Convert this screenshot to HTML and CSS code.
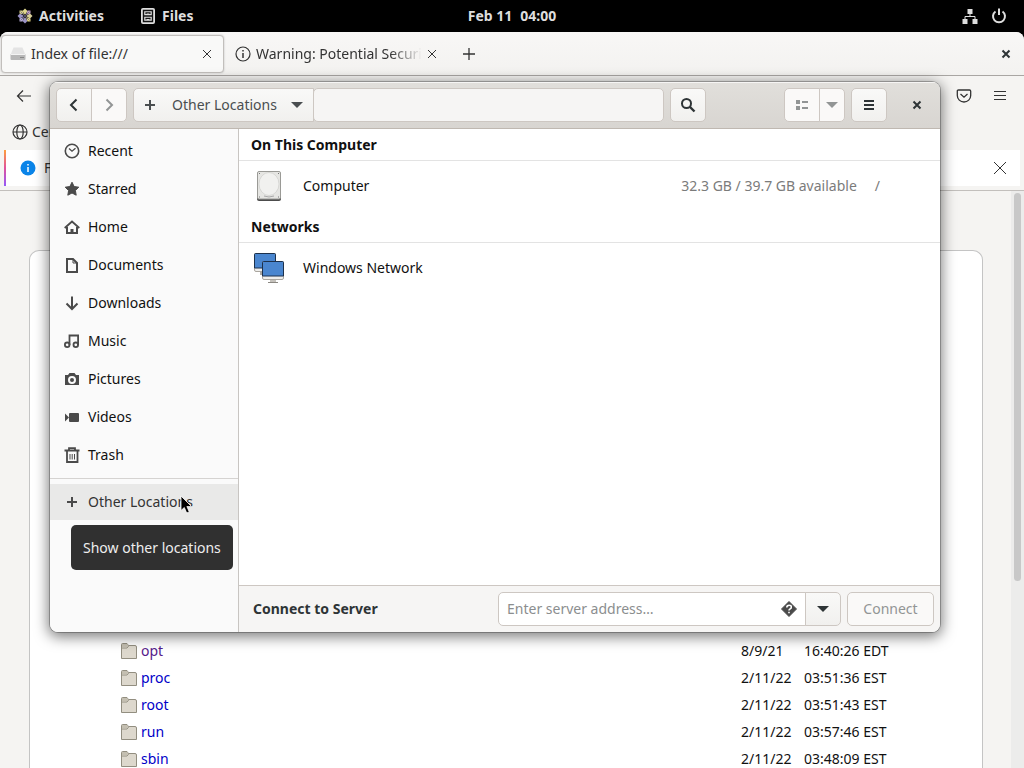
FILE: index.html
```html
<!DOCTYPE html>
<html lang="en">
  <head>
    <meta charset="utf-8">
    <title>Other Locations</title>
    <link rel="stylesheet" href="styles.css">
  </head>

  <body>
    <header class="topbar">
      <div class="topbar-left">
        <button class="topbar-item activities">
          <svg width="16" height="16" viewBox="0 0 16 16">
            <path d="M8 .500l2.500 2.500L8 7 5.500 3z" fill="#e0d88e"/>
            <path d="M8 9l2.500 4L8 15.500 5.500 13z" fill="#9a92c4"/>
            <path d="M3 5.500L7 8l-4 2.500L.500 8z" fill="#9a92c4"/>
            <path d="M13 5.500L15.500 8 13 10.500 9 8z" fill="#d8cf9a"/>
            <path d="M2.500 2.500h3l1.500 4-4.500-1z" fill="#d9d08a"/>
            <path d="M10.500 2.500h3v3L9 7z" fill="#c29fc2"/>
            <path d="M2.500 10.500L7 9l-1.500 4.500h-3z" fill="#b6acd4"/>
            <path d="M9 9l4.500 1.500v3h-3z" fill="#e3d67e"/>
            <path d="M3.500 3.500l9 9M12.500 3.500l-9 9" stroke="#6b6480" stroke-width=".8"/>
          </svg>
          Activities
        </button>
        <button class="topbar-item">
          <svg width="16" height="16" viewBox="0 0 16 16">
            <rect x="1" y="0" width="14" height="16" rx="2" fill="#dedede"/>
            <path d="M3.500 2.500h9v11h-9zM3.500 8h9" fill="none" stroke="#111" stroke-width="1.400"/>
            <path d="M6 6V4.800h4V6M6 11.500v-1.200h4v1.200" fill="none" stroke="#111" stroke-width="1.200"/>
          </svg>
          Files
        </button>
      </div>
      <button class="topbar-item clock"><span>Feb 11</span><span>04:00</span></button>
      <button class="topbar-item status" aria-label="System">
        <svg width="16" height="16" viewBox="0 0 16 16" fill="#dedede">
          <path d="M5.500 1h5v5h-5zM.500 11h5v5h-5zM10.500 11h5v5h-5z"/>
          <path d="M8 6v2.500M3 11V8.500h10V11" fill="none" stroke="#dedede"/>
        </svg>
        <svg width="16" height="16" viewBox="0 0 16 16" fill="none" stroke="#dedede" stroke-width="2">
          <path d="M4.500 3.500a6 6 0 1 0 7 0M8 .500V7"/>
        </svg>
      </button>
    </header>

    <main class="desktop">
      <section class="browser">
        <div class="tabs">
          <div class="tab tab-active">
            <svg width="16" height="16" viewBox="0 0 16 16">
              <path d="M3.500 1.500h9L15.500 9H.500z" fill="#e4e4e4"/>
              <rect x=".500" y="8" width="15" height="6" rx="1" fill="#b8b8b8"/>
              <path d="M1 8.500h14" stroke="#f4f4f4"/>
              <path d="M10 11.500h4" stroke="#888"/>
            </svg>
            <span class="tab-title">Index of file:///</span>
            <button class="icon-btn" aria-label="Close tab">
              <svg width="10" height="10" viewBox="0 0 10 10"><path d="M1 1l8 8M9 1L1 9" stroke="#333" fill="none"/></svg>
            </button>
          </div>
          <div class="tab">
            <svg width="16" height="16" viewBox="0 0 16 16" fill="none" stroke="#333" stroke-width="1.200">
              <circle cx="8" cy="8" r="7"/><path d="M8 7v5M8 4v1.500" stroke-width="1.500"/>
            </svg>
            <span class="tab-title tab-fade">Warning: Potential Security Risk</span>
            <button class="icon-btn" aria-label="Close tab">
              <svg width="10" height="10" viewBox="0 0 10 10"><path d="M1 1l8 8M9 1L1 9" stroke="#333" fill="none"/></svg>
            </button>
          </div>
          <button class="icon-btn tab-new" aria-label="New tab">
            <svg width="12" height="12" viewBox="0 0 12 12"><path d="M6 0v12M0 6h12" stroke="#333" stroke-width="1.300"/></svg>
          </button>
          <button class="icon-btn browser-close" aria-label="Close window">
            <svg width="10" height="10" viewBox="0 0 10 10"><path d="M1.500 1.500l7 7M8.500 1.500l-7 7" stroke="#2e3436" stroke-width="2"/></svg>
          </button>
        </div>
        <div class="toolbar">
          <button class="icon-btn" aria-label="Back">
            <svg width="16" height="16" viewBox="0 0 16 16" fill="none" stroke="#333" stroke-width="1.200"><path d="M15 8H2M7 2.500L1.500 8 7 13.500"/></svg>
          </button>
          <div class="toolbar-right">
            <button class="icon-btn" aria-label="Save to Pocket">
              <svg width="16" height="16" viewBox="0 0 16 16" fill="none" stroke="#333" stroke-width="1.300"><path d="M2.500 2h11q1.200 0 1.200 1.200V7.500a6.700 6.500 0 0 1-13.400 0V3.200Q1.300 2 2.500 2zM4.500 6L8 9.200 11.500 6"/></svg>
            </button>
            <button class="icon-btn" aria-label="Menu">
              <svg width="12" height="12" viewBox="0 0 12 12" stroke="#333"><path d="M0 1.500h12M0 5.500h12M0 9.500h12"/></svg>
            </button>
          </div>
        </div>
        <div class="bookmarks">
          <a href="#">
            <svg width="16" height="16" viewBox="0 0 16 16" fill="none" stroke="#333" stroke-width="1.200"><circle cx="8" cy="8" r="7"/><ellipse cx="8" cy="8" rx="3.200" ry="7"/><path d="M1 8h14"/></svg>
            CentOS
          </a>
        </div>
        <div class="notice">
          <svg width="16" height="16" viewBox="0 0 16 16"><circle cx="8" cy="8" r="7.500" fill="#0a84e8"/><path d="M8 7v5M8 4v1.600" stroke="#fff" stroke-width="1.500"/></svg>
          <span>Firefox</span>
          <button class="icon-btn" aria-label="Dismiss">
            <svg width="12" height="12" viewBox="0 0 12 12"><path d="M0 0l12 12M12 0L0 12" stroke="#333"/></svg>
          </button>
        </div>
        <div class="page">
          <div class="listing">
            <table>
              <tr>
                <td><a href="#" class="visited"><svg width="16" height="16" viewBox="0 0 16 16"><use href="#folder"/></svg>opt</a></td>
                <td>8/9/21</td>
                <td>16:40:26 EDT</td>
              </tr>
              <tr>
                <td><a href="#"><svg width="16" height="16" viewBox="0 0 16 16"><use href="#folder"/></svg>proc</a></td>
                <td>2/11/22</td>
                <td>03:51:36 EST</td>
              </tr>
              <tr>
                <td><a href="#"><svg width="16" height="16" viewBox="0 0 16 16"><use href="#folder"/></svg>root</a></td>
                <td>2/11/22</td>
                <td>03:51:43 EST</td>
              </tr>
              <tr>
                <td><a href="#"><svg width="16" height="16" viewBox="0 0 16 16"><use href="#folder"/></svg>run</a></td>
                <td>2/11/22</td>
                <td>03:57:46 EST</td>
              </tr>
              <tr>
                <td><a href="#"><svg width="16" height="16" viewBox="0 0 16 16"><use href="#folder"/></svg>sbin</a></td>
                <td>2/11/22</td>
                <td>03:48:09 EST</td>
              </tr>
            </table>
          </div>
          <div class="scrollbar"><div class="scrollbar-thumb"></div></div>
        </div>
      </section>
    </main>

    <section class="files">
      <div class="headerbar">
        <div class="linked">
          <button class="btn" aria-label="Back"><svg width="16" height="16" viewBox="0 0 16 16" fill="none" stroke="#2e3436" stroke-width="2"><path d="M10.500 2.500L5 8l5.500 5.500"/></svg></button>
          <button class="btn btn-off" aria-label="Forward" disabled><svg width="16" height="16" viewBox="0 0 16 16" fill="none" stroke="#929595" stroke-width="2"><path d="M5.500 2.500L11 8l-5.500 5.500"/></svg></button>
        </div>
        <div class="linked pathbar">
          <button class="btn path-btn">
            <svg width="16" height="16" viewBox="0 0 16 16" stroke="#4a4e50" stroke-width="2"><path d="M8 3v10M3 8h10"/></svg>
            <span>Other Locations</span>
            <svg width="12" height="6" viewBox="0 0 12 6" fill="#4a4e50"><path d="M0 0h12L6 6z"/></svg>
          </button>
          <div class="path-rest"></div>
        </div>
        <button class="btn" aria-label="Search"><svg width="16" height="16" viewBox="0 0 16 16" fill="none" stroke="#2e3436" stroke-width="2"><circle cx="6.500" cy="6.500" r="4.500"/><path d="M10 10l4.500 4.500" stroke-width="2.400"/></svg></button>
        <div class="linked view-switch">
          <button class="btn btn-off" aria-label="View" disabled><svg width="12" height="10" viewBox="0 0 12 10" fill="#929595"><path d="M0 0h4v4H0zM0 6h4v4H0zM6 1h6v2H6zM6 7h6v2H6z"/></svg></button>
          <button class="btn btn-off btn-narrow" aria-label="View options" disabled><svg width="12" height="6" viewBox="0 0 12 6" fill="#929595"><path d="M0 0h12L6 6z"/></svg></button>
        </div>
        <button class="btn" aria-label="Menu"><svg width="10" height="10" viewBox="0 0 10 10" fill="#2e3436"><path d="M0 0h10v2H0zM0 4h10v2H0zM0 8h10v2H0z"/></svg></button>
        <button class="icon-btn files-close" aria-label="Close"><svg width="10" height="10" viewBox="0 0 10 10"><path d="M1.500 1.500l7 7M8.500 1.500l-7 7" stroke="#2e3436" stroke-width="2"/></svg></button>
      </div>

      <div class="files-body">
        <nav class="sidebar">
          <a href="#"><svg width="16" height="16" viewBox="0 0 16 16" fill="none" stroke="#4a4a4a" stroke-width="1.600"><circle cx="8" cy="8" r="6.700"/><path d="M5 5.500L8 8.200l3.500-3" stroke-width="1.300"/></svg>Recent</a>
          <a href="#"><svg width="16" height="16" viewBox="0 0 16 16" fill="#4a4a4a" stroke="#4a4a4a" stroke-linejoin="round"><path d="M8 1.200l2.100 4.300 4.700.700-3.400 3.300.800 4.700L8 12l-4.200 2.200.800-4.700L1.200 6.200l4.700-.700z"/></svg>Starred</a>
          <a href="#"><svg width="16" height="16" viewBox="0 0 16 16" fill="none" stroke="#4a4a4a" stroke-width="2"><path d="M.700 9L8 2.500 15.300 9" stroke-width="1.800"/><path d="M3 8v6h10V8"/><path d="M6.500 14v-4h3v4z" fill="#4a4a4a" stroke="none"/></svg>Home</a>
          <a href="#"><svg width="16" height="16" viewBox="0 0 16 16" fill="none" stroke="#4a4a4a" stroke-width="2"><path d="M3 2h6l4 4v9H3z"/><path d="M9 2v4h4" stroke-width="1"/></svg>Documents</a>
          <a href="#"><svg width="16" height="16" viewBox="0 0 16 16" fill="none" stroke="#4a4a4a" stroke-width="2"><path d="M8 1.500v12M2.500 8.500L8 14l5.500-5.500"/></svg>Downloads</a>
          <a href="#"><svg width="16" height="16" viewBox="0 0 16 16" fill="none" stroke="#4a4a4a" stroke-width="1.800"><circle cx="3.200" cy="11.800" r="2.300"/><circle cx="11.800" cy="11.800" r="2.300"/><path d="M5.500 12V7M5.500 7.500V2.500h8.600V12"/></svg>Music</a>
          <a href="#"><svg width="16" height="16" viewBox="0 0 16 16"><path d="M1 4h3l1.500-2h5L12 4h3v10H1z" fill="#4a4a4a"/><circle cx="8" cy="9" r="3" fill="none" stroke="#fafafa" stroke-width="2"/></svg>Pictures</a>
          <a href="#"><svg width="16" height="16" viewBox="0 0 16 16" fill="#4a4a4a"><path d="M1 4.500l4 4-4 4z"/><rect x="5" y="4" width="10" height="9" rx="1"/></svg>Videos</a>
          <a href="#"><svg width="16" height="16" viewBox="0 0 16 16" fill="none" stroke="#4a4a4a" stroke-width="1.800"><path d="M.500 3.500h15M5 3V1.200h6V3M3 4v11h10.500V4"/><path d="M6 7v5.500M8.200 7v5.500M10.500 7v5.500" stroke-width="1"/></svg>Trash</a>
          <hr>
          <a href="#" class="selected"><svg width="16" height="16" viewBox="0 0 16 16" stroke="#4a4a4a" stroke-width="2"><path d="M8 3v10M3 8h10"/></svg>Other Locations</a>
        </nav>

        <div class="places">
          <h2>On This Computer</h2>
          <div class="place">
            <svg width="32" height="32" viewBox="0 0 32 32">
              <rect x="4" y="3" width="24" height="28" rx="2" fill="#4c4c4c"/>
              <rect x="4.500" y="1.500" width="23" height="27.500" rx="1.500" fill="#e6e6e3" stroke="#9a9a96"/>
              <ellipse cx="16" cy="14" rx="10" ry="11.500" fill="#f1f1ef" stroke="#cfcfcb" stroke-width=".7"/>
              <path d="M11 26q5 2 10 0" fill="none" stroke="#aaa"/>
              <path d="M6 3.500h1M25 3.500h1M6 27h1M25 27h1" stroke="#777"/>
            </svg>
            <span class="place-name">Computer</span>
            <span class="place-space">32.3 GB / 39.7 GB available</span>
            <span class="place-mount">/</span>
          </div>
          <h2>Networks</h2>
          <div class="place">
            <svg width="32" height="32" viewBox="0 0 32 32">
              <path d="M7 20h5v3H7z" fill="#aaa69f"/>
              <rect x="1.500" y="1.500" width="21" height="18" rx="1.500" fill="#eeeeec" stroke="#aaa69f"/>
              <path d="M1.500 16V2.500q0-1 1-1h19q1 0 1 1V16z" fill="#4a86cf" stroke="#1d314c"/>
              <path d="M17 28h6v2h-6z" fill="#c5c2bc"/><path d="M15 30.500h10" stroke="#8b8882"/>
              <rect x="9.500" y="9.500" width="21" height="18" rx="1.500" fill="#eeeeec" stroke="#aaa69f"/>
              <path d="M9.500 24V10.500q0-1 1-1h19q1 0 1 1V24z" fill="#4a86cf" stroke="#1d314c"/>
            </svg>
            <span class="place-name">Windows Network</span>
          </div>
          <form class="connect">
            <label for="server">Connect to Server</label>
            <div class="linked server">
              <div class="server-entry">
                <input type="text" id="server" placeholder="Enter server address…">
                <button type="button" class="icon-btn" aria-label="Help">
                  <svg width="16" height="16" viewBox="0 0 16 16"><path d="M8 .500L15.500 8 8 15.500.500 8z" fill="#4a4a4a" stroke="#4a4a4a" stroke-linejoin="round"/><path d="M5.800 6.500q0-2.300 2.300-2.300t2.200 2q0 1.200-1.300 1.700Q8 8.300 8 9.500M8 10.700v1.600" fill="none" stroke="#fff" stroke-width="1.600"/></svg>
                </button>
              </div>
              <button type="button" class="btn" aria-label="Recent servers"><svg width="12" height="6" viewBox="0 0 12 6" fill="#2e3436"><path d="M0 0h12L6 6z"/></svg></button>
            </div>
            <button type="button" class="btn btn-off connect-btn" disabled>Connect</button>
          </form>
        </div>
      </div>
    </section>

    <div class="tooltip" role="tooltip">Show other locations</div>
    <svg class="cursor" width="14" height="20" viewBox="0 0 14 20"><path d="M1 1v14.500l3.300-3 2.400 5.500 2.600-1.100-2.400-5.400h4.600z" fill="#000" stroke="#fff" stroke-width=".8"/></svg>

    <svg class="defs" width="0" height="0">
      <symbol id="folder" viewBox="0 0 16 16">
        <path d="M.500 15.500v-14q0-1 1-1H6l1.500 2H14q1.500 0 1.500 1.500v11.500z" fill="#ddd8cd" stroke="#928e80"/>
        <path d="M1 5h5l2-2.500" fill="none" stroke="#928e80"/>
        <path d="M1 1h5l1.200 1.500L5.500 4.500H1z" fill="#c4bfb1"/>
      </symbol>
    </svg>
  </body>
</html>
```

FILE: styles.css
```css
* {
  box-sizing: border-box;
}

body {
  margin: 0;
  height: 100vh;
  display: flex;
  flex-direction: column;
  overflow: hidden;
  background: #000;
  color: #111;
  font-family: "Noto Sans", sans-serif;
  font-size: 14px;
  line-height: 20px;
}

button,
input {
  font: inherit;
  color: inherit;
}

button {
  border: 0;
  padding: 0;
  background: none;
}

a {
  color: inherit;
  text-decoration: none;
}

svg {
  flex: none;
  display: block;
}

.defs {
  position: absolute;
}

/* top panel */

.topbar {
  flex: none;
  height: 32px;
  padding: 0 17px;
  display: grid;
  grid-template-columns: 1fr auto 1fr;
  align-items: center;
  color: #dedede;
  font-weight: 700;
}

.topbar-left {
  display: flex;
  gap: 36px;
}

.topbar-item {
  display: flex;
  align-items: center;
  gap: 6px;
}

.clock {
  gap: 8px;
}

.status {
  justify-self: end;
  gap: 13px;
}

/* browser */

.desktop {
  flex: 1;
  min-height: 0;
  display: flex;
}

.browser {
  flex: 1;
  display: flex;
  flex-direction: column;
  background: #f5f4f2;
  border-radius: 8px 8px 0 0;
  color: #333;
  overflow: hidden;
}

.icon-btn {
  flex: none;
  display: flex;
  align-items: center;
  justify-content: center;
}

.tabs {
  flex: none;
  height: 44px;
  padding: 3px 13px 2px 1px;
  display: flex;
  align-items: center;
  border-bottom: 1px solid #a9a6a3;
  background: linear-gradient(#f8f7f6, #f3f2f0);
}

.tab {
  width: 223px;
  height: 38px;
  padding: 0 11px 0 8px;
  display: flex;
  align-items: center;
  gap: 5px;
}

.tab + .tab {
  padding-left: 11px;
  width: 224px;
}

.tab-active {
  border: 1px solid #c2bfbc;
  border-radius: 4px;
  background: #f9f9f8;
  box-shadow: 0 0 2px #bbb;
}

.tab-title {
  flex: 1;
  overflow: hidden;
  white-space: nowrap;
}

.tab-fade {
  -webkit-mask-image: linear-gradient(to left, transparent, #000 32px);
  mask-image: linear-gradient(to left, transparent, #000 32px);
}

.tab-new {
  margin-left: 15px;
}

.browser-close {
  margin-left: auto;
}

.toolbar {
  flex: none;
  height: 40px;
  padding: 0 18px 0 16px;
  display: flex;
  align-items: center;
  justify-content: space-between;
}

.toolbar-right {
  display: flex;
  align-items: center;
  gap: 22px;
}

.bookmarks {
  flex: none;
  height: 34px;
  padding: 0 12px 2px;
  display: flex;
  align-items: center;
}

.bookmarks a {
  display: flex;
  align-items: center;
  gap: 4px;
}

.notice {
  flex: none;
  height: 36px;
  margin: 0 4px 4px;
  padding: 0 14px;
  display: flex;
  align-items: center;
  gap: 8px;
  background: #fff;
  border-left: 2px solid;
  border-image: linear-gradient(#ffa436, #e0529c, #9059ff) 1;
}

.notice .icon-btn {
  margin-left: auto;
}

.page {
  flex: 1;
  min-height: 0;
  display: flex;
  border-top: 1px solid #c2bfbc;
}

.listing {
  flex: 1;
  margin: 59px 28px 0 29px;
  padding: 386px 91px 0;
  background: #fff;
  border: 1px solid #c4c4c4;
  border-bottom: 0;
  border-radius: 10px 10px 0 0;
}

.listing table {
  width: 100%;
  border-collapse: collapse;
  color: #111;
}

.listing tr {
  height: 27px;
}

.listing td {
  padding: 0;
  white-space: nowrap;
}

.listing td:nth-child(2) {
  width: 63px;
}

.listing td:nth-child(3) {
  width: 87px;
}

.listing a {
  display: flex;
  align-items: center;
  gap: 4px;
  color: #0000c8;
}

.listing .visited {
  color: #551a8b;
}

.scrollbar {
  width: 13px;
  padding: 2px 3px;
  background: #ececeb;
}

.scrollbar-thumb {
  height: 388px;
  border-radius: 4px;
  background: #c8c8c8;
}

/* file manager window */

.files {
  position: absolute;
  top: 82px;
  left: 50px;
  right: 84px;
  height: 550px;
  display: flex;
  flex-direction: column;
  background: #fff;
  border-radius: 8px;
  box-shadow: 0 0 0 1px rgba(0, 0, 0, 0.25), 0 3px 14px 2px rgba(0, 0, 0, 0.5);
  overflow: hidden;
}

.headerbar {
  flex: none;
  height: 47px;
  padding: 0 5px 0 6px;
  display: flex;
  align-items: center;
  gap: 6px;
  background: linear-gradient(#e1dfdb, #d8d5d1);
  border-bottom: 1px solid #bfb8b1;
  box-shadow: inset 0 1px #f6f5f4;
}

.btn {
  flex: none;
  width: 36px;
  height: 34px;
  display: flex;
  align-items: center;
  justify-content: center;
  border: 1px solid #cdc7c2;
  border-radius: 5px;
  background: linear-gradient(#f9f9f8, #f1f0ee);
  color: #2e3436;
}

.btn-off {
  background: #faf9f8;
  color: #929595;
}

.btn-narrow {
  width: 26px;
}

.linked {
  display: flex;
}

.linked > * + * {
  margin-left: -1px;
  border-top-left-radius: 0;
  border-bottom-left-radius: 0;
}

.linked > :not(:last-child) {
  border-top-right-radius: 0;
  border-bottom-right-radius: 0;
}

.pathbar {
  flex: 1;
}

.path-btn {
  width: 181px;
  padding: 0 10px 0 8px;
  justify-content: space-between;
  color: #4a4e50;
}

.path-rest {
  flex: 1;
  border: 1px solid #cdc7c2;
  border-radius: 5px;
  background: #f6f5f4;
}

.view-switch {
  margin-left: 72px;
}

.files-close {
  width: 36px;
  height: 34px;
  margin-left: 6px;
}

.files-body {
  flex: 1;
  min-height: 0;
  display: flex;
}

.sidebar {
  flex: none;
  width: 189px;
  padding-top: 4px;
  display: flex;
  flex-direction: column;
  background: #fafafa;
  border-right: 1px solid #c8c5c2;
}

.sidebar a {
  height: 36px;
  margin-bottom: 2px;
  padding-left: 14px;
  display: flex;
  align-items: center;
  gap: 8px;
}

.sidebar hr {
  width: 100%;
  height: 1px;
  margin: 3px 0 5px;
  border: 0;
  background: #d5d3d1;
}

.sidebar .selected {
  background: #e9e9e8;
  color: #333;
}

.places {
  flex: 1;
  display: flex;
  flex-direction: column;
}

.places h2 {
  height: 32px;
  margin: 0;
  padding: 6px 12px;
  border-bottom: 1px solid #e3e3e3;
  font-size: 14px;
  line-height: 20px;
  font-weight: 700;
}

.place {
  height: 50px;
  padding: 0 60px 0 14px;
  display: flex;
  align-items: center;
}

.place-name {
  flex: 1;
  margin-left: 18px;
}

.place-space,
.place-mount {
  color: #7b7b7b;
}

.place-mount {
  margin-left: 18px;
}

.connect {
  height: 47px;
  margin-top: auto;
  padding: 0 6px 0 14px;
  display: flex;
  align-items: center;
  gap: 6px;
  background: #f6f5f4;
  border-top: 1px solid #cdc7c2;
}

.connect label {
  flex: 1;
  color: #2e3436;
  font-weight: 700;
}

.server {
  width: 343px;
}

.server-entry {
  flex: 1;
  display: flex;
  padding: 0 8px;
  border: 1px solid #cdc7c2;
  border-radius: 5px;
  background: #fff;
}

.server-entry input {
  flex: 1;
  min-width: 0;
  padding: 0;
  border: 0;
  background: none;
}

.server-entry input::placeholder {
  color: #8b8e8f;
}

.connect-btn {
  width: 87px;
}

.tooltip {
  position: absolute;
  top: 525px;
  left: 71px;
  padding: 13px 12px 12px;
  border-radius: 5px;
  background: #303030;
  color: #eee;
}

.cursor {
  position: absolute;
  top: 495px;
  left: 180px;
}
```
